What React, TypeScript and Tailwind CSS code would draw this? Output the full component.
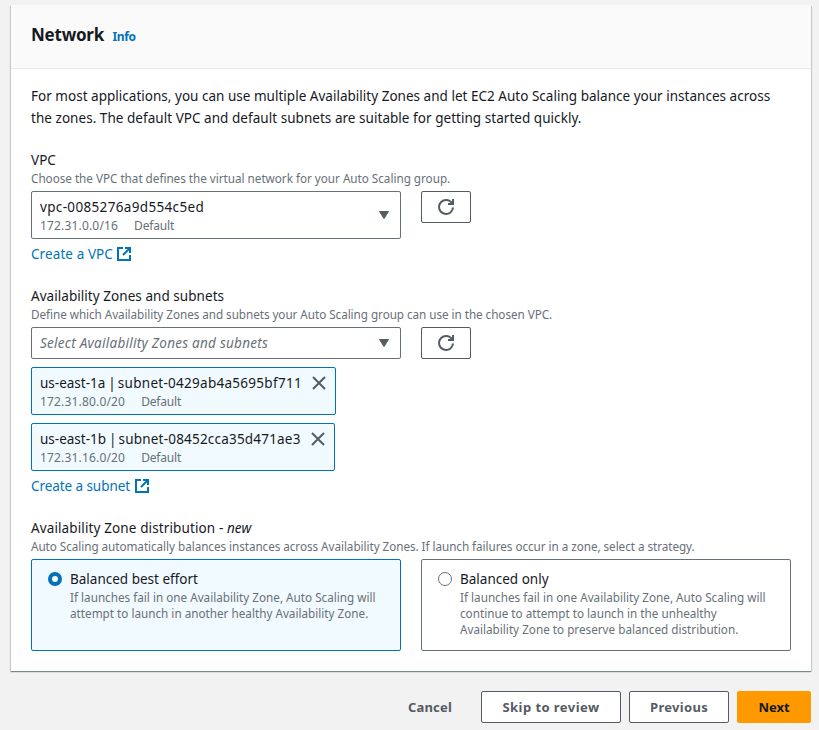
import type { ReactNode } from 'react';

function ExternalIcon() {
  return (
    <svg width="16" height="16" viewBox="0 0 16 16" fill="none" stroke="currentColor" strokeWidth="2" className="shrink-0">
      <path d="M14 9v5H2V2h5" />
      <path d="M9 2h5v5" />
      <path d="m7 9 7-7" />
    </svg>
  );
}

function RefreshButton() {
  return (
    <button className="flex h-8 w-[50px] items-center justify-center rounded-[2px] border border-[#545b64] bg-white text-[#545b64]">
      <svg width="16" height="16" viewBox="0 0 16 16" fill="none" stroke="currentColor" strokeWidth="2" className="overflow-visible">
        <path d="M15 8.500A7 7 0 1 1 8 1c2.790 0 5.200 1.630 6.330 4" />
        <path d="M15 0v5h-5" />
      </svg>
    </button>
  );
}

function Caret() {
  return (
    <svg width="12" height="10" viewBox="0 0 12 10" className="shrink-0 fill-[#545b64]">
      <path d="M1.500 1.500h9L6 8.500z" stroke="#545b64" strokeLinejoin="round" strokeWidth="1" />
    </svg>
  );
}

function Label({ children }: { children: ReactNode }) {
  return <div className="h-[22px] text-[13.5px] leading-[22px] tracking-[0.05px]">{children}</div>;
}

function Hint({ children }: { children: ReactNode }) {
  return <div className="h-4 text-[11.7px] leading-[15px] tracking-[-0.04px] whitespace-nowrap text-[#687078]">{children}</div>;
}

function Tags({ cidr }: { cidr: string }) {
  return (
    <div className="flex h-4 gap-4 text-[12px] leading-4 text-[#687078]">
      <span className="tracking-[0.17px]">{cidr}</span>
      <span className="tracking-[-0.17px]">Default</span>
    </div>
  );
}

function Link({ children }: { children: ReactNode }) {
  return (
    <a className="flex h-[22px] items-center text-[13.5px] leading-[22px] text-[#0073bb]">
      {children}
      <ExternalIcon />
    </a>
  );
}

function Token({ zone, subnet, cidr }: { zone: string; subnet: ReactNode; cidr: string }) {
  return (
    <div className="flex h-12 items-start rounded-[2px] border border-[#0073bb] bg-[#f1faff] pt-[5px] pl-2">
      <div>
        <div className="h-[21px] text-[13.5px] leading-[21px] whitespace-nowrap">
          {zone} <span className="-mr-[1.5px] -ml-[0.5px]">|</span> {subnet}
        </div>
        <Tags cidr={cidr} />
      </div>
      <svg width="16" height="16" viewBox="0 0 16 16" className="mt-[2px] mr-2 ml-auto shrink-0" stroke="#545b64" strokeWidth="2">
        <path d="m2 2 12 12M14 2 2 14" />
      </svg>
    </div>
  );
}

function Tile({ title, selected, children }: { title: string; selected?: boolean; children: ReactNode }) {
  return (
    <div className={'flex h-[92px] w-[370px] gap-2 rounded-[2px] border pt-[9px] pl-4 ' + (selected ? 'border-[#0073bb] bg-[#f1faff]' : 'border-[#687078] bg-white')}>
      <span className={'mt-[3px] size-[14px] shrink-0 rounded-full bg-white ' + (selected ? 'border-[4px] border-[#0073bb]' : 'border border-[#687078]')} />
      <div>
        <div className="h-5 text-[13.5px] leading-[21px]">{title}</div>
        <div className="text-[11.7px] leading-4 tracking-[0.01px] whitespace-nowrap text-[#687078]">{children}</div>
      </div>
    </div>
  );
}

export default function App() {
  return (
    <div className="h-[730px] w-[819px] overflow-hidden bg-[#f2f2f2] pt-[5px] pl-[11px] font-['Noto_Sans','Open_Sans',sans-serif] text-[#16191f]">
      <section className="h-[666px] w-[800px] bg-white shadow-[0_1px_1px_0_rgba(0,28,36,0.3),1px_1px_1px_0_rgba(0,28,36,0.15),-1px_1px_1px_0_rgba(0,28,36,0.15)]">
        <header className="flex h-16 items-baseline gap-[8.5px] border-b border-[#eaeded] bg-[#fafafa] pt-[17px] pl-5">
          <h2 className="text-[17px] leading-[26px] font-bold tracking-[-0.24px]">Network</h2>
          <a className="text-[12px] leading-5 font-bold tracking-[-0.4px] text-[#0073bb]">Info</a>
        </header>

        <div className="px-5 pt-4">
          <p className="text-[13.5px] leading-[22px] tracking-[0.018px] whitespace-nowrap">
            For most applications, you can use multiple Availability Zones and let EC2 Auto Scaling balance your instances across
            <br />
            <span className="tracking-[0.04px]">the zones. The default VPC and default subnets are suitable for getting started quickly.</span>
          </p>

          <div className="mt-5">
            <Label>VPC</Label>
            <Hint><span className="tracking-[-0.01px]">Choose the VPC that defines the virtual network for your Auto Scaling group.</span></Hint>
            <div className="mt-1 flex gap-5">
              <div className="flex h-12 w-[370px] items-center rounded-[2px] border border-[#687078] pr-[10px] pl-2">
                <div className="grow">
                  <div className="h-[21px] text-[13.5px] leading-[21px] tracking-[0.34px]">vpc-0085276a9d554c5ed</div>
                  <Tags cidr="172.31.0.0/16" />
                </div>
                <Caret />
              </div>
              <RefreshButton />
            </div>
            <div className="mt-1">
              <Link><span className="mr-[3px] tracking-[0.09px]">Create a VPC</span></Link>
            </div>
          </div>

          <div className="mt-5">
            <Label>Availability Zones and subnets</Label>
            <Hint>Define which Availability Zones and subnets your Auto Scaling group can use in the chosen VPC.</Hint>
            <div className="mt-1 flex gap-5">
              <div className="flex h-8 w-[370px] items-center justify-between rounded-[2px] border border-[#687078] pr-[10px] pl-2">
                <span className="text-[13.5px] tracking-[0.26px] text-[#687078] italic">Select Availability Zones and subnets</span>
                <Caret />
              </div>
              <RefreshButton />
            </div>
            <div className="mt-2 flex flex-col gap-2">
              <div className="w-[305px]">
                <Token zone="us-east-1a" subnet={<span className="tracking-[0.28px]">subnet-0429ab4a5695bf711</span>} cidr="172.31.80.0/20" />
              </div>
              <div className="w-[304px]">
                <Token zone="us-east-1b" subnet={<span className="tracking-[0.2px]">subnet-08452cca35d471ae3</span>} cidr="172.31.16.0/20" />
              </div>
            </div>
            <div className="mt-1">
              <Link><span className="mr-1 tracking-[-0.07px]">Create a subnet</span></Link>
            </div>
          </div>

          <div className="mt-5">
            <Label>
              <span className="tracking-[0.12px]">Availability Zone distribution - </span>
              <em>new</em>
            </Label>
            <Hint>Auto Scaling automatically balances instances across Availability Zones. If launch failures occur in a zone, select a strategy.</Hint>
            <div className="mt-1 flex gap-5">
              <Tile title="Balanced best effort" selected>
                If launches fail in one Availability Zone, Auto Scaling will
                <br />
                attempt to launch in another healthy Availability Zone.
              </Tile>
              <Tile title="Balanced only">
                If launches fail in one Availability Zone, Auto Scaling will
                <br />
                continue to attempt to launch in the unhealthy
                <br />
                Availability Zone to preserve balanced distribution.
              </Tile>
            </div>
          </div>
        </div>
      </section>

      <footer className="mt-5 flex h-8 w-[800px] justify-end gap-2 text-[13px] font-bold text-[#545b64]">
        <button className="mr-[21px] pt-px tracking-[0.18px]">Cancel</button>
        <button className="w-[140px] rounded-[2px] border border-[#545b64] bg-white pt-px tracking-[0.44px]">Skip to review</button>
        <button className="w-[100px] rounded-[2px] border border-[#545b64] bg-white pt-px tracking-[0.3px]">Previous</button>
        <button className="w-[74px] rounded-[2px] bg-[#ff9900] pt-px text-[#16191f]">Next</button>
      </footer>
    </div>
  );
}
